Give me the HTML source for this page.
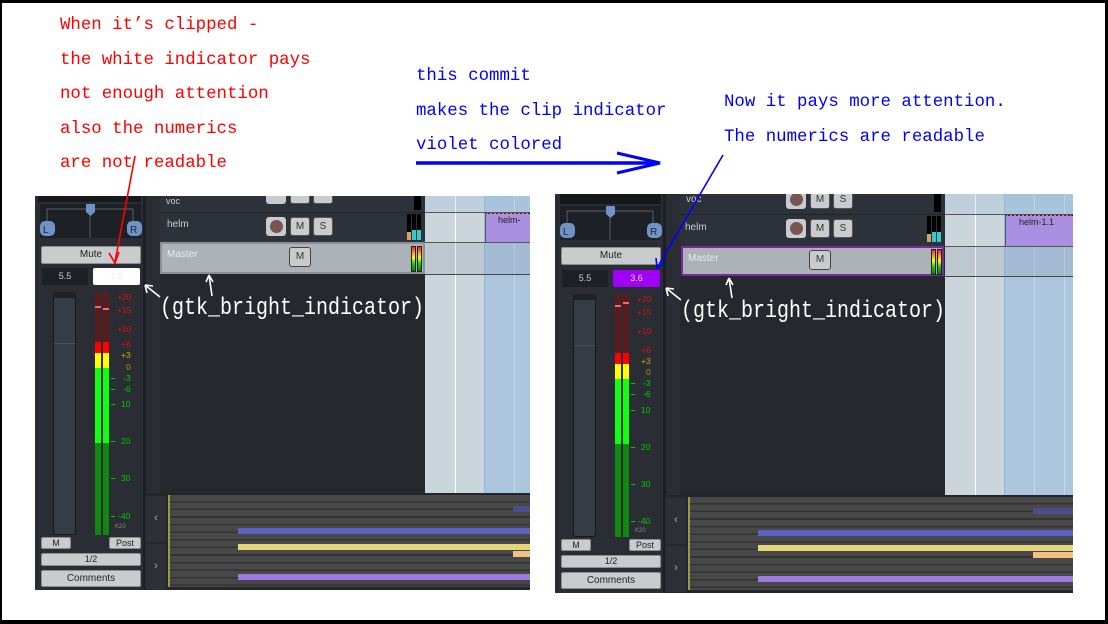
<!DOCTYPE html>
<html><head><meta charset="utf-8"><style>
*{margin:0;padding:0;box-sizing:border-box}
body{width:1108px;height:624px;background:#000;position:relative;overflow:hidden;font-family:"Liberation Sans",sans-serif}
.page{position:absolute;left:2px;top:3px;width:1103px;height:617px;background:#fff}
.a{position:absolute}
.note{position:absolute;font-family:"Liberation Mono",monospace;font-size:17.4px;line-height:34.5px;white-space:pre}
.panel{position:absolute;background:#25282d;overflow:hidden}
.panel .a{position:absolute}
.btn{background:#c9cbce;border-radius:2px;color:#222;font-size:10px;text-align:center;border:1px solid #8a8d91}
.sc{position:absolute;font-size:8.5px;left:82px}
.tk{position:absolute;height:1px;width:4px}
.rowbtn{background:#c9cbce;border:1px solid #555;border-radius:3px;font-size:10px;color:#333;text-align:center;line-height:17px}
.ind{font-family:"Liberation Mono",monospace;font-size:20px;color:#fff;white-space:pre;position:absolute}
</style></head><body><div class="page"></div>

<div class="note" style="left:60px;top:9px;color:#f00">When it’s clipped -
the white indicator pays
not enough attention
also the numerics
are not readable</div>
<div class="note" style="left:416px;top:60px;color:#00f">this commit
makes the clip indicator
violet colored</div>
<div class="note" style="left:724px;top:86px;color:#00f">Now it pays more attention.
The numerics are readable</div>

<!-- LEFT PANEL -->
<div class="panel" style="left:35px;top:196px;width:495px;height:394px">
 <div class="a" style="left:0;top:0;width:125px;height:394px;background:#2a2e34"></div>
 <div class="a" style="left:3px;top:0;width:103px;height:6px;background:#16181b"></div>
 <div class="a" style="left:5px;top:8px;width:101px;height:34px;background:#1d2024"></div>
 <svg class="a" style="left:0;top:0" width="125" height="50"><path d="M12 30V13H98V30M55 13V42" stroke="#5a6068" fill="none"/><path d="M51 8h9v8l-4.5 4-4.5-4z" fill="#6f93c4"/><rect x="5" y="25" width="15" height="15" rx="5" fill="#6f93c4"/><rect x="92" y="25" width="15" height="15" rx="5" fill="#6f93c4"/><text x="8" y="37" font-size="10" fill="#223">L</text><text x="95" y="37" font-size="10" fill="#223">R</text></svg>
 <div class="a btn" style="left:6px;top:50px;width:100px;height:18px;line-height:16px">Mute</div>
 <div class="a" style="left:7px;top:72px;width:46px;height:17px;background:#1d2024;color:#ccc;font-size:9px;text-align:center;line-height:17px">5.5</div>
 <div class="a" style="left:58px;top:72px;width:47px;height:17px;background:#fff;border-radius:2px;color:#eee;font-size:9px;text-align:center;line-height:17px">1.8</div>
 <div class="a" style="left:18px;top:96px;width:23px;height:243px;background:#353c45;border:1px solid #15181b;border-radius:3px;border-top:6px solid #1e2227"></div>
 <div class="a" style="left:19px;top:147px;width:21px;height:1px;background:#4a525c"></div>
 <div class="a" style="left:60px;top:96px;width:6px;height:243px;background:linear-gradient(#5a1c1c 0,#5a1c1c 50px,#f00 50px,#f00 61px,#ff0 61px,#ff0 76px,#1f1 76px,#1f1 151px,#118811 151px)"></div>
 <div class="a" style="left:68px;top:96px;width:6px;height:243px;background:linear-gradient(#5a1c1c 0,#5a1c1c 50px,#f00 50px,#f00 61px,#ff0 61px,#ff0 76px,#1f1 76px,#1f1 151px,#118811 151px)"></div>
 <div class="a" style="left:60px;top:110px;width:6px;height:2px;background:#f66"></div><div class="a" style="left:68px;top:112px;width:6px;height:2px;background:#f66"></div>
 <div class="sc" style="top:96px;color:#e01010">+20</div><div class="sc" style="top:109px;color:#e01010">+15</div><div class="sc" style="top:128px;color:#e01010">+10</div><div class="sc" style="top:143px;color:#e01010;left:86px">+6</div><div class="sc" style="top:154px;color:#bbb000;left:86px">+3</div><div class="sc" style="top:166px;color:#aa9a00;left:91px">0</div><div class="sc" style="top:177px;color:#0c0;left:88px">-3</div><div class="sc" style="top:188px;color:#0c0;left:88px">-6</div><div class="sc" style="top:203px;color:#0c0;left:86px">10</div><div class="sc" style="top:240px;color:#0c0;left:86px">20</div><div class="sc" style="top:277px;color:#0c0;left:86px">30</div><div class="sc" style="top:315px;color:#0c0;left:83px">-40</div><div class="sc" style="top:328px;color:#888;font-size:6px;left:80px">K20</div>
 <div class="tk" style="left:76px;top:208px;background:#0c0"></div><div class="tk" style="left:76px;top:245px;background:#0c0"></div><div class="tk" style="left:76px;top:282px;background:#0c0"></div><div class="tk" style="left:76px;top:320px;background:#0c0"></div><div class="tk" style="left:76px;top:193px;background:#0c0"></div><div class="tk" style="left:76px;top:182px;background:#0c0"></div>
 <div class="a btn" style="left:6px;top:341px;width:30px;height:12px;line-height:10px;font-size:9px">M</div>
 <div class="a btn" style="left:74px;top:341px;width:32px;height:12px;line-height:10px;font-size:9px">Post</div>
 <div class="a btn" style="left:6px;top:357px;width:100px;height:13px;line-height:11px;font-size:9px">1/2</div>
 <div class="a btn" style="left:6px;top:374px;width:100px;height:17px;line-height:15px">Comments</div>
 <div class="a" style="left:108px;top:0;width:3px;height:394px;background:#1c1f23"></div>
 <div class="a" style="left:125px;top:0;width:265px;height:16px;background:#2d323a;color:#ccc;font-size:9px;padding-left:6px">voc</div>
 <div class="a" style="left:125px;top:16px;width:265px;height:30px;background:#2d323a;border-top:1px solid #22262b;color:#ccc;font-size:10px;padding:6px 0 0 7px">helm</div>
 <div class="a" style="left:231px;top:21px;width:20px;height:19px;border-radius:3px;background:#c9cbce"></div><div class="a" style="left:235px;top:24px;width:13px;height:13px;border-radius:50%;background:#7a5450"></div>
 <div class="a rowbtn" style="left:255px;top:21px;width:20px;height:19px">M</div><div class="a rowbtn" style="left:278px;top:21px;width:20px;height:19px">S</div>
 <div class="a" style="left:231px;top:-6px;width:20px;height:14px;border-radius:3px;background:#c9cbce"></div><div class="a rowbtn" style="left:255px;top:-6px;width:20px;height:14px"></div><div class="a rowbtn" style="left:278px;top:-6px;width:20px;height:14px"></div>
 <div class="a" style="left:379px;top:0;width:7px;height:14px;background:#000"></div>
 <div class="a" style="left:372px;top:18px;width:4px;height:26px;background:linear-gradient(#000 18px,#d9a060 18px)"></div><div class="a" style="left:377px;top:18px;width:4px;height:26px;background:linear-gradient(#000 16px,#3cc 16px)"></div><div class="a" style="left:382px;top:18px;width:4px;height:26px;background:linear-gradient(#000 16px,#3cc 16px)"></div>
 <div class="a" style="left:125px;top:46px;width:265px;height:32px;background:#adb2b8;border:2px solid #8c9096;color:#e9eaeb;font-size:10px;padding:5px 0 0 5px">Master</div>
 <div class="a rowbtn" style="left:254px;top:51px;width:22px;height:20px;border-color:#444">M</div>
 <div class="a" style="left:376px;top:50px;width:5px;height:26px;background:linear-gradient(#f22,#ff0 45%,#1c1 70%,#080);border:1px solid #222"></div><div class="a" style="left:382px;top:50px;width:5px;height:26px;background:linear-gradient(#f22,#ff0 45%,#1c1 70%,#080);border:1px solid #222"></div>
 <div class="a" style="left:390px;top:0;width:105px;height:297px;background:linear-gradient(90deg,#cbd5dc 0,#cbd5dc 30px,#fff 30px,#fff 31px,#cbd5dc 31px,#cbd5dc 59px,#8fb7e6 59px,#8fb7e6 60px,#abc6dd 60px,#abc6dd 89px,#c5d6e5 89px,#c5d6e5 90px,#abc6dd 90px)"></div>
 <div class="a" style="left:390px;top:0;width:105px;height:16px;background:rgba(160,190,220,.25)"></div>
 <div class="a" style="left:450px;top:16px;width:45px;height:30px;background:#a98fe0;border-left:1px solid #555;font-size:9px;color:#222;padding:1px 0 0 12px;border-top:2px dotted #800">helm-</div>
 <div class="a" style="left:390px;top:16px;width:105px;height:1px;background:#555"></div><div class="a" style="left:390px;top:46px;width:105px;height:1px;background:#555"></div><div class="a" style="left:390px;top:78px;width:105px;height:1px;background:#444"></div>
 <div class="a" style="left:390px;top:47px;width:105px;height:31px;background:rgba(120,130,145,.15)"></div>
 <div class="a" style="left:110px;top:297px;width:385px;height:97px;background:#23262b"></div>
 <div class="a" style="left:111px;top:300px;width:20px;height:46px;background:#2d3137;color:#aaa;font-size:11px;text-align:center;line-height:44px">‹</div>
 <div class="a" style="left:111px;top:348px;width:20px;height:46px;background:#2d3137;color:#aaa;font-size:11px;text-align:center;line-height:44px">›</div>
 <div class="a" style="left:133px;top:299px;width:362px;height:92px;background:repeating-linear-gradient(#484848 0,#484848 6px,#333 6px,#333 7.6px);border-left:2px solid #9a9a40"></div>
 <div class="a" style="left:203px;top:332px;width:292px;height:6px;background:#5b62c0"></div>
 <div class="a" style="left:203px;top:348px;width:292px;height:6px;background:#e3d67a"></div>
 <div class="a" style="left:478px;top:355px;width:17px;height:6px;background:#f2c080"></div>
 <div class="a" style="left:478px;top:310px;width:17px;height:6px;background:#4a4f8a"></div>
 <div class="a" style="left:203px;top:378px;width:292px;height:6px;background:#9b7be0"></div>
</div>

<!-- RIGHT PANEL -->
<div class="panel" style="left:555px;top:194px;width:518px;height:399px">
 <div class="a" style="left:0;top:0;width:125px;height:399px;background:#2a2e34"></div>
 <div class="a" style="left:5px;top:0;width:101px;height:10px;background:#16181b"></div>
 <div class="a" style="left:5px;top:12px;width:101px;height:34px;background:#1d2024"></div>
 <svg class="a" style="left:0;top:4px" width="125" height="50"><path d="M12 30V13H98V30M55 13V42" stroke="#5a6068" fill="none"/><path d="M51 8h9v8l-4.5 4-4.5-4z" fill="#6f93c4"/><rect x="5" y="25" width="15" height="15" rx="5" fill="#6f93c4"/><rect x="92" y="25" width="15" height="15" rx="5" fill="#6f93c4"/><text x="8" y="37" font-size="10" fill="#223">L</text><text x="95" y="37" font-size="10" fill="#223">R</text></svg>
 <div class="a btn" style="left:6px;top:53px;width:100px;height:18px;line-height:16px">Mute</div>
 <div class="a" style="left:7px;top:76px;width:46px;height:17px;background:#1d2024;color:#ccc;font-size:9px;text-align:center;line-height:17px">5.5</div>
 <div class="a" style="left:58px;top:76px;width:47px;height:17px;background:#a000f8;border-radius:2px;color:#ddd;font-size:9px;text-align:center;line-height:17px">3.6</div>
 <div class="a" style="left:18px;top:100px;width:23px;height:243px;background:#353c45;border:1px solid #15181b;border-radius:3px;border-top:6px solid #1e2227"></div>
 <div class="a" style="left:19px;top:151px;width:21px;height:1px;background:#4a525c"></div>
 <div class="a" style="left:60px;top:100px;width:6px;height:243px;background:linear-gradient(#5a1c1c 0,#5a1c1c 59px,#f00 59px,#f00 70px,#ff0 70px,#ff0 85px,#1f1 85px,#1f1 150px,#118811 150px)"></div>
 <div class="a" style="left:68px;top:100px;width:6px;height:243px;background:linear-gradient(#5a1c1c 0,#5a1c1c 59px,#f00 59px,#f00 70px,#ff0 70px,#ff0 85px,#1f1 85px,#1f1 150px,#118811 150px)"></div>
 <div class="a" style="left:60px;top:111px;width:6px;height:2px;background:#f66"></div><div class="a" style="left:68px;top:108px;width:6px;height:2px;background:#f66"></div>
 <div class="sc" style="top:100px;color:#e01010">+20</div><div class="sc" style="top:113px;color:#e01010">+15</div><div class="sc" style="top:132px;color:#e01010">+10</div><div class="sc" style="top:151px;color:#e01010;left:86px">+6</div><div class="sc" style="top:162px;color:#bbb000;left:86px">+3</div><div class="sc" style="top:173px;color:#aa9a00;left:91px">0</div><div class="sc" style="top:184px;color:#0c0;left:88px">-3</div><div class="sc" style="top:195px;color:#0c0;left:88px">-6</div><div class="sc" style="top:211px;color:#0c0;left:86px">10</div><div class="sc" style="top:248px;color:#0c0;left:86px">20</div><div class="sc" style="top:285px;color:#0c0;left:86px">30</div><div class="sc" style="top:322px;color:#0c0;left:83px">-40</div><div class="sc" style="top:334px;color:#888;font-size:6px;left:80px">K20</div>
 <div class="tk" style="left:76px;top:216px;background:#0c0"></div><div class="tk" style="left:76px;top:253px;background:#0c0"></div><div class="tk" style="left:76px;top:290px;background:#0c0"></div><div class="tk" style="left:76px;top:327px;background:#0c0"></div><div class="tk" style="left:76px;top:200px;background:#0c0"></div><div class="tk" style="left:76px;top:189px;background:#0c0"></div>
 <div class="a btn" style="left:6px;top:345px;width:30px;height:12px;line-height:10px;font-size:9px">M</div>
 <div class="a btn" style="left:74px;top:345px;width:32px;height:12px;line-height:10px;font-size:9px">Post</div>
 <div class="a btn" style="left:6px;top:361px;width:100px;height:13px;line-height:11px;font-size:9px">1/2</div>
 <div class="a btn" style="left:6px;top:378px;width:100px;height:17px;line-height:15px">Comments</div>
 <div class="a" style="left:108px;top:0;width:3px;height:399px;background:#1c1f23"></div>
 <div class="a" style="left:125px;top:0;width:265px;height:20px;background:#2d323a;color:#ccc;font-size:10px;padding-left:6px">voc</div>
 <div class="a" style="left:125px;top:20px;width:265px;height:32px;background:#2d323a;border-top:1px solid #22262b;color:#ccc;font-size:10px;padding:7px 0 0 5px">helm</div>
 <div class="a" style="left:231px;top:25px;width:20px;height:19px;border-radius:3px;background:#c9cbce"></div><div class="a" style="left:235px;top:28px;width:13px;height:13px;border-radius:50%;background:#7a5450"></div>
 <div class="a rowbtn" style="left:255px;top:25px;width:20px;height:19px">M</div><div class="a rowbtn" style="left:278px;top:25px;width:20px;height:19px">S</div>
 <div class="a" style="left:231px;top:-4px;width:20px;height:19px;border-radius:3px;background:#c9cbce"></div><div class="a" style="left:235px;top:-1px;width:13px;height:13px;border-radius:50%;background:#7a5450"></div><div class="a rowbtn" style="left:255px;top:-4px;width:20px;height:19px">M</div><div class="a rowbtn" style="left:278px;top:-4px;width:20px;height:19px">S</div>
 <div class="a" style="left:379px;top:0;width:7px;height:18px;background:#000"></div>
 <div class="a" style="left:372px;top:22px;width:4px;height:26px;background:linear-gradient(#000 18px,#d9a060 18px)"></div><div class="a" style="left:377px;top:22px;width:4px;height:26px;background:linear-gradient(#000 16px,#3cc 16px)"></div><div class="a" style="left:382px;top:22px;width:4px;height:26px;background:linear-gradient(#000 16px,#3cc 16px)"></div>
 <div class="a" style="left:126px;top:52px;width:263px;height:30px;background:#adb2b8;border:2px solid #7a2aa0;color:#e9eaeb;font-size:10px;padding:5px 0 0 5px">Master</div>
 <div class="a rowbtn" style="left:254px;top:56px;width:22px;height:20px;border-color:#444">M</div>
 <div class="a" style="left:376px;top:55px;width:5px;height:26px;background:linear-gradient(#f22,#ff0 45%,#1c1 70%,#080);border:1px solid #222"></div><div class="a" style="left:382px;top:55px;width:5px;height:26px;background:linear-gradient(#f22,#ff0 45%,#1c1 70%,#080);border:1px solid #222"></div>
 <div class="a" style="left:390px;top:0;width:128px;height:301px;background:linear-gradient(90deg,#cbd5dc 0,#cbd5dc 30px,#fff 30px,#fff 31px,#cbd5dc 31px,#cbd5dc 59px,#8fb7e6 59px,#8fb7e6 60px,#abc6dd 60px,#abc6dd 89px,#c5d6e5 89px,#c5d6e5 90px,#abc6dd 90px,#abc6dd 119px,#c5d6e5 119px,#c5d6e5 120px,#abc6dd 120px)"></div>
 <div class="a" style="left:390px;top:0;width:128px;height:20px;background:rgba(160,190,220,.25)"></div>
 <div class="a" style="left:450px;top:20px;width:68px;height:32px;background:#a98fe0;border-left:1px solid #555;font-size:9px;color:#222;padding:1px 0 0 13px;border-top:2px dotted #800">helm-1.1</div>
 <div class="a" style="left:390px;top:20px;width:128px;height:1px;background:#555"></div><div class="a" style="left:390px;top:52px;width:128px;height:1px;background:#555"></div><div class="a" style="left:390px;top:82px;width:128px;height:1px;background:#444"></div>
 <div class="a" style="left:390px;top:53px;width:128px;height:29px;background:rgba(120,130,145,.15)"></div>
 <div class="a" style="left:110px;top:301px;width:408px;height:98px;background:#23262b"></div>
 <div class="a" style="left:111px;top:304px;width:20px;height:46px;background:#2d3137;color:#aaa;font-size:11px;text-align:center;line-height:44px">‹</div>
 <div class="a" style="left:111px;top:352px;width:20px;height:46px;background:#2d3137;color:#aaa;font-size:11px;text-align:center;line-height:44px">›</div>
 <div class="a" style="left:133px;top:303px;width:385px;height:93px;background:repeating-linear-gradient(#484848 0,#484848 6px,#333 6px,#333 7.6px);border-left:2px solid #9a9a40"></div>
 <div class="a" style="left:203px;top:336px;width:315px;height:6px;background:#5b62c0"></div>
 <div class="a" style="left:203px;top:351px;width:315px;height:6px;background:#e3d67a"></div>
 <div class="a" style="left:478px;top:358px;width:40px;height:6px;background:#f2c080"></div>
 <div class="a" style="left:478px;top:314px;width:40px;height:6px;background:#4a4f8a"></div>
 <div class="a" style="left:203px;top:382px;width:315px;height:6px;background:#9b7be0"></div>
</div>

<div class="ind" style="left:160px;top:295px;transform:scaleY(1.2);transform-origin:left top">(gtk_bright_indicator)</div>
<div class="ind" style="left:681px;top:298px;transform:scaleY(1.2);transform-origin:left top">(gtk_bright_indicator)</div>

<svg class="a" style="left:0;top:0" width="1108" height="624">
 <g stroke="#f00" stroke-width="1.6" fill="none"><path d="M135 156L115 262"/><path d="M109 253l6 10 4-11"/></g>
 <g stroke="#00f" fill="none"><path d="M416 163H658" stroke-width="3.5"/><path d="M617 153l43 10-43 10" stroke-width="3"/><path d="M723 155L657 268" stroke-width="1.6"/><path d="M656 258l1 10 8-6" stroke-width="1.6"/></g>
 <g stroke="#fff" stroke-width="1.6" fill="none"><path d="M160 297L145 285M145 285l2 8M145 285l8 1"/><path d="M212 296L209 275M209 275l-3 7M209 275l4 7"/><path d="M681 300L666 288M666 288l2 8M666 288l8 1"/><path d="M732 298L729 278M729 278l-3 7M729 278l4 7"/></g>
</svg>
</body></html>
